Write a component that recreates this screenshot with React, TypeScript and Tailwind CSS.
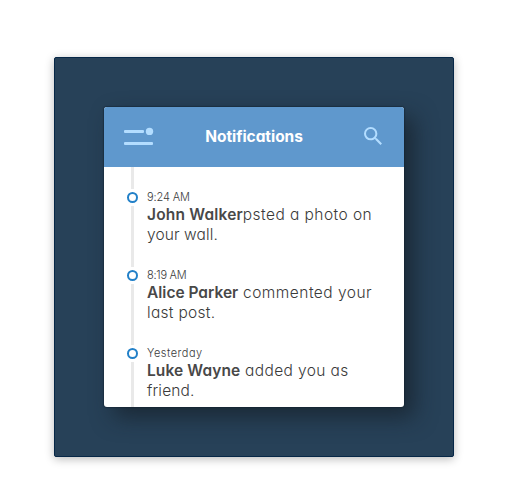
type Notice = {
  time: string;
  name: string;
  first: string;
  second: string;
  timeTracking: string;
  nameTracking: string;
  firstTracking: string;
  secondTracking: string;
};

const notices: Notice[] = [
  {
    time: "9:24 AM", name: "John Walker", first: "psted a photo on", second: "your wall.",
    timeTracking: "tracking-[-0.12px]", nameTracking: "tracking-[0.18px]", firstTracking: "tracking-[0.44px]", secondTracking: "tracking-[0.1px]",
  },
  {
    time: "8:19 AM", name: "Alice Parker", first: " commented your", second: "last post.",
    timeTracking: "tracking-[-0.25px]", nameTracking: "tracking-normal", firstTracking: "tracking-[0.47px]", secondTracking: "tracking-[0.3px]",
  },
  {
    time: "Yesterday", name: "Luke Wayne", first: " added you as", second: "friend.",
    timeTracking: "tracking-[0.5px]", nameTracking: "tracking-[0.1px]", firstTracking: "tracking-[0.38px]", secondTracking: "tracking-[0.15px]",
  },
];

function Header() {
  return (
    <header className="flex h-[60px] shrink-0 items-center justify-between bg-[#5f98cd] pr-[22px] pl-5">
      <svg className="-mt-0.5" width="30" height="18" viewBox="0 0 30 18" fill="#b3ddff" aria-label="Menu">
        <rect x="0" y="3" width="20" height="3" rx="1" />
        <circle cx="25.5" cy="4.4" r="3.7" />
        <rect x="0" y="15" width="29" height="3" rx="1" />
      </svg>
      <h1 className="-ml-2.5 text-[15.5px] leading-5 font-bold tracking-[-0.05px] whitespace-nowrap text-white">Notifications</h1>
      <svg className="mt-[-3px]" width="18" height="18" viewBox="3 3 17.5 17.5" fill="#b3ddff" aria-label="Search">
        <path d="M15.5 14h-.79l-.28-.27A6.471 6.471 0 0 0 16 9.5 6.5 6.5 0 1 0 9.5 16c1.61 0 3.09-.59 4.23-1.57l.27.28v.79l5 4.99L20.49 19l-4.99-5zm-6 0C7.01 14 5 11.99 5 9.5S7.01 5 9.5 5 14 7.01 14 9.5 11.99 14 9.5 14z" />
      </svg>
    </header>
  );
}

function NoticeRow({ notice }: { notice: Notice }) {
  return (
    <li className="flex h-[78px] shrink-0">
      <div className="mr-[9px] flex w-[11px] flex-col items-center">
        <div className="h-[22px] w-[3px] shrink-0 bg-[#e9e9e9]" />
        <div className="my-[3px] size-[11px] shrink-0 rounded-full border-2 border-[#2280c8] bg-white" />
        <div className="w-[3px] grow bg-[#e9e9e9]" />
      </div>
      <div className="pt-[22px] whitespace-nowrap text-[#3a3a3a]">
        <div className={`h-4 text-[11px] leading-4 font-light ${notice.timeTracking}`}>{notice.time}</div>
        <p className="text-[15.5px] leading-5 font-light">
          <b className={`font-semibold text-[#484848] ${notice.nameTracking}`}>{notice.name}</b>
          <span className={notice.firstTracking}>{notice.first}</span>
          <br />
          <span className={notice.secondTracking}>{notice.second}</span>
        </p>
      </div>
    </li>
  );
}

export default function App() {
  return (
    <div className="h-[494px] w-[506px] bg-white pt-[57px] pl-[54px] font-['Inter','Open_Sans',sans-serif] [font-feature-settings:'cv11','ss03']">
      <main className="flex size-[400px] items-center justify-center rounded-[2px] border border-[#062747] bg-[#274158] shadow-[0_2px_10px_rgba(0,0,0,0.28)]">
        <section className="flex size-[300px] flex-col overflow-hidden rounded-[3px] bg-white shadow-[0_0_1px_1px_rgba(15,30,45,0.45),10px_10px_22px_rgba(20,28,36,0.65)]">
          <Header />
          <ul className="flex flex-col overflow-hidden pl-[23px]">
            {notices.map((notice) => (
              <NoticeRow key={notice.name} notice={notice} />
            ))}
            <li className="ml-1 h-[6px] w-[3px] shrink-0 bg-[#e9e9e9]" />
          </ul>
        </section>
      </main>
    </div>
  );
}
